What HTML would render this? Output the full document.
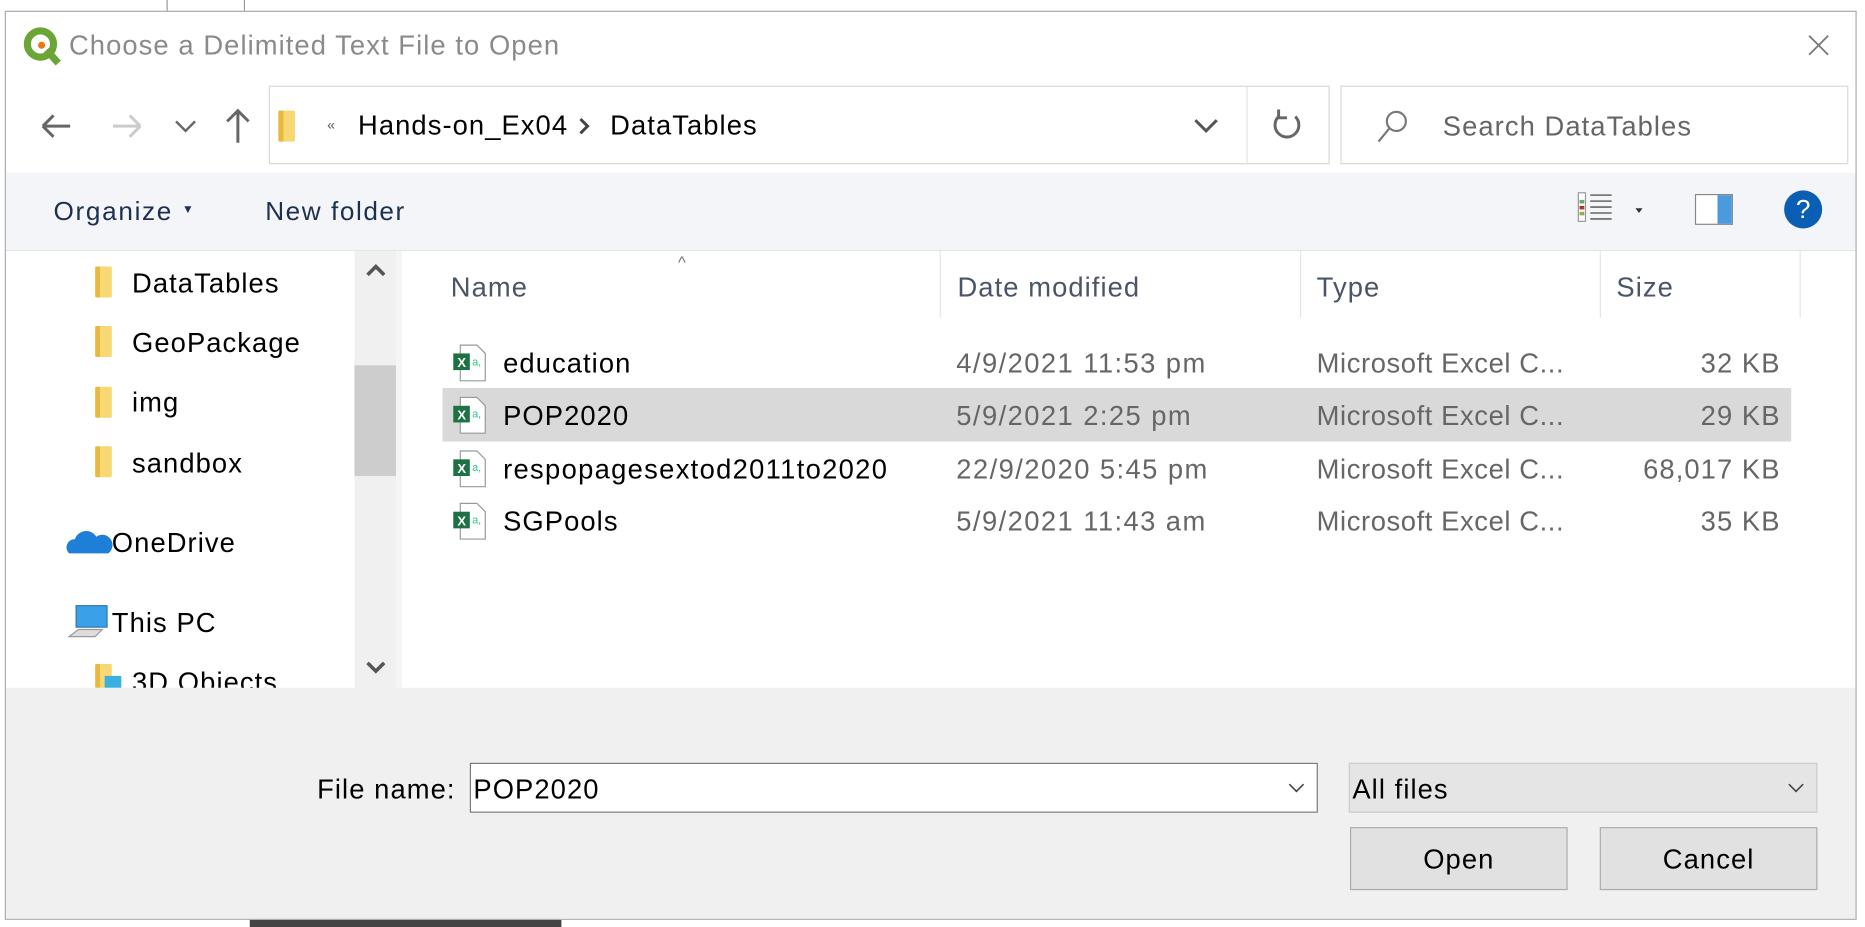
<!DOCTYPE html>
<html><head><meta charset="utf-8"><style>
*{margin:0;padding:0;box-sizing:border-box}
html,body{width:1865px;height:927px;overflow:hidden;background:#fff}
#w{position:absolute;left:0;top:0;width:1568px;height:779px;transform:scale(1.18941,1.19);transform-origin:0 0;font-family:"Liberation Sans",sans-serif;color:#000}
.a{position:absolute}
.t{position:absolute;white-space:nowrap;font-size:22px;line-height:26px;letter-spacing:0.9px}
.f{position:absolute;width:14px;height:26px;background:linear-gradient(90deg,#e8b93c 0 30%,#f8d775 30%);border-radius:1px}
.x{position:absolute;width:28px;height:32px}
</style></head><body><div id="w">
<div class="a" style="left:0;top:0;width:1568px;height:779px;background:#fff"></div>
<div class="a" style="left:140px;top:0;width:1px;height:10px;background:#999"></div>
<div class="a" style="left:205px;top:0;width:1px;height:10px;background:#999"></div>
<div class="a" style="left:210px;top:771px;width:262px;height:8px;background:#444"></div>
<div class="a" style="left:4px;top:9px;width:1557px;height:764px;border:1px solid #aaa;background:#fff"></div>
<svg class="a" style="left:19px;top:22px" width="34" height="34" viewBox="0 0 34 34"><circle cx="15" cy="15" r="11" fill="none" stroke="#6aa535" stroke-width="6"/><path d="M20 20 L30 31" stroke="#6aa535" stroke-width="6"/><circle cx="16" cy="16" r="3" fill="#ee7913"/></svg>
<div class="t" style="left:58px;top:25px;color:#8a8a8a;font-size:23px">Choose a Delimited Text File to Open</div>
<svg class="a" style="left:1518px;top:27px" width="22" height="22"><path d="M3 3L19 19M19 3L3 19" stroke="#777" stroke-width="1.5"/></svg>
<svg class="a" style="left:32px;top:93px" width="30" height="26"><path d="M4 13H27M4 13L13 4M4 13L13 22" stroke="#666" stroke-width="2.5" fill="none"/></svg>
<svg class="a" style="left:92px;top:93px" width="30" height="26"><path d="M26 13H3M26 13L17 4M26 13L17 22" stroke="#ccc" stroke-width="2.5" fill="none"/></svg>
<svg class="a" style="left:145px;top:98px" width="22" height="16"><path d="M3 4L11 12L19 4" stroke="#666" stroke-width="2" fill="none"/></svg>
<svg class="a" style="left:188px;top:90px" width="24" height="32"><path d="M12 30V3M3 12L12 3L21 12" stroke="#666" stroke-width="2.5" fill="none"/></svg>
<div class="a" style="left:226px;top:72px;width:892px;height:66px;border:1px solid #d9d9d9"></div>
<div class="a" style="left:1048px;top:72px;width:1px;height:66px;background:#e5e5e5"></div>
<div class="f" style="left:234px;top:93px"></div>
<div class="t" style="left:275px;top:92px;font-size:12px;color:#555">«</div>
<div class="t" style="left:301px;top:92px;font-size:23px">Hands-on_Ex04</div>
<svg class="a" style="left:484px;top:97px" width="14" height="18"><path d="M4 3L10 9L4 15" stroke="#444" stroke-width="2.5" fill="none"/></svg>
<div class="t" style="left:513px;top:92px;font-size:23px">DataTables</div>
<svg class="a" style="left:1002px;top:98px" width="24" height="16"><path d="M3 3L12 12L21 3" stroke="#555" stroke-width="2.5" fill="none"/></svg>
<svg class="a" style="left:1067px;top:89px" width="30" height="32"><path d="M22 9A10 10 0 1 1 8 9" stroke="#666" stroke-width="2.5" fill="none"/><path d="M8 3V10H15" stroke="#666" stroke-width="2.5" fill="none"/></svg>
<div class="a" style="left:1127px;top:72px;width:427px;height:66px;border:1px solid #d9d9d9"></div>
<svg class="a" style="left:1155px;top:90px" width="34" height="32"><circle cx="19" cy="12" r="8" fill="none" stroke="#777" stroke-width="1.8"/><path d="M13 18L4 29" stroke="#777" stroke-width="1.8"/></svg>
<div class="t" style="left:1213px;top:93px;font-size:23px;color:#666">Search DataTables</div>
<div class="a" style="left:5px;top:145px;width:1555px;height:66px;background:#f3f5f8;border-bottom:1px solid #e5e5e5"></div>
<div class="t" style="left:45px;top:165px;color:#1e3050;letter-spacing:1.4px">Organize</div>
<div class="t" style="left:153px;top:164px;color:#1e3050;font-size:10px">▼</div>
<div class="t" style="left:223px;top:165px;color:#1e3050;letter-spacing:1.3px">New folder</div>
<svg class="a" style="left:1325px;top:160px" width="60" height="30"><g stroke="#666" stroke-width="1.3"><path d="M12 4H30M12 9H30M12 14H30M12 19H30M12 24H30"/></g><rect x="2" y="2" width="6" height="24" fill="#fff" stroke="#999"/><rect x="3" y="8" width="4" height="3" fill="#6a6"/><rect x="3" y="13" width="4" height="3" fill="#a33"/><rect x="3" y="18" width="4" height="3" fill="#9a5"/><path d="M50 15L56 15L53 19Z" fill="#333"/></svg>
<div class="a" style="left:1425px;top:163px;width:32px;height:26px;border:1px solid #888;background:linear-gradient(90deg,#fff 0 60%,#4a9ae0 60%)"></div>
<div class="a" style="left:1500px;top:160px;width:32px;height:32px;border-radius:50%;background:#0a5fb4;color:#fff;font-size:22px;text-align:center;line-height:32px">?</div>
<div class="f" style="left:80px;top:224px"></div><div class="t" style="left:111px;top:225px;font-size:23px">DataTables</div>
<div class="f" style="left:80px;top:274px"></div><div class="t" style="left:111px;top:275px;font-size:23px">GeoPackage</div>
<div class="f" style="left:80px;top:325px"></div><div class="t" style="left:111px;top:325px;font-size:23px">img</div>
<div class="f" style="left:80px;top:375px"></div><div class="t" style="left:111px;top:376px;font-size:23px">sandbox</div>
<svg class="a" style="left:55px;top:443px" width="40" height="24"><path d="M3 22A7 7 0 0 1 8 10A10 10 0 0 1 26 8A8 8 0 0 1 36 22Z" fill="#1e7fd8"/></svg>
<div class="t" style="left:94px;top:443px;font-size:23px">OneDrive</div>
<svg class="a" style="left:56px;top:507px" width="40" height="32"><rect x="8" y="2" width="26" height="18" fill="#3aa0e8" stroke="#3371b0"/><path d="M2 28L10 22H30L24 28Z" fill="#ddd" stroke="#999"/></svg>
<div class="t" style="left:94px;top:510px;font-size:23px">This PC</div>
<div class="f" style="left:80px;top:558px;height:20px"></div><div class="a" style="left:88px;top:568px;width:14px;height:10px;background:#3ab0e0"></div>
<div class="a" style="left:111px;top:560px;width:200px;height:18px;overflow:hidden"><div class="t" style="left:0;top:0;font-size:23px">3D Objects</div></div>
<div class="a" style="left:298px;top:211px;width:35px;height:367px;background:#f0f0f0"></div>
<div class="a" style="left:298px;top:307px;width:35px;height:93px;background:#cdcdcd"></div>
<svg class="a" style="left:306px;top:220px" width="20" height="14"><path d="M3 11L10 4L17 11" stroke="#555" stroke-width="3" fill="none"/></svg>
<svg class="a" style="left:306px;top:554px" width="20" height="14"><path d="M3 3L10 10L17 3" stroke="#555" stroke-width="3" fill="none"/></svg>
<div class="a" style="left:333px;top:211px;width:5px;height:367px;background:#f5f5f5"></div>
<div class="t" style="left:570px;top:207px;font-size:14px;color:#777">^</div>
<div class="t" style="left:379px;top:228px;color:#4a5568;font-size:23px">Name</div>
<div class="t" style="left:805px;top:228px;color:#4a5568;font-size:23px">Date modified</div>
<div class="t" style="left:1107px;top:228px;color:#4a5568;font-size:23px">Type</div>
<div class="t" style="left:1359px;top:228px;color:#4a5568;font-size:23px">Size</div>
<div class="a" style="left:790px;top:211px;width:1px;height:56px;background:#e5e5e5"></div>
<div class="a" style="left:1093px;top:211px;width:1px;height:56px;background:#e5e5e5"></div>
<div class="a" style="left:1345px;top:211px;width:1px;height:56px;background:#e5e5e5"></div>
<div class="a" style="left:1513px;top:211px;width:1px;height:56px;background:#e5e5e5"></div>
<div class="a" style="left:372px;top:326px;width:1134px;height:45px;background:#d9d9d9"></div>
<svg style="display:none"><symbol id="xl" viewBox="0 0 28 32"><path d="M6 1H20L27 8V31H6Z" fill="#fff" stroke="#999"/><rect x="0" y="8" width="14" height="14" fill="#1e7145"/><text x="3.5" y="19.5" font-size="11" font-weight="bold" fill="#fff" font-family="Liberation Sans">X</text><text x="16" y="18" font-size="9" fill="#33c481" font-family="Liberation Sans">a,</text></symbol></svg>
<svg class="x" style="left:381px;top:289px"><use href="#xl"/></svg>
<svg class="x" style="left:381px;top:333px"><use href="#xl"/></svg>
<svg class="x" style="left:381px;top:378px"><use href="#xl"/></svg>
<svg class="x" style="left:381px;top:422px"><use href="#xl"/></svg>
<div class="t" style="left:423px;top:292px;font-size:23px">education</div>
<div class="t" style="left:423px;top:336px;font-size:23px">POP2020</div>
<div class="t" style="left:423px;top:381px;font-size:23px;letter-spacing:1.1px">respopagesextod2011to2020</div>
<div class="t" style="left:423px;top:425px;font-size:23px">SGPools</div>
<div class="t" style="left:804px;top:292px;font-size:23px;color:#666;letter-spacing:1.2px">4/9/2021 11:53 pm</div>
<div class="t" style="left:804px;top:336px;font-size:23px;color:#666;letter-spacing:1.2px">5/9/2021 2:25 pm</div>
<div class="t" style="left:804px;top:381px;font-size:23px;color:#666;letter-spacing:1.2px">22/9/2020 5:45 pm</div>
<div class="t" style="left:804px;top:425px;font-size:23px;color:#666;letter-spacing:1.2px">5/9/2021 11:43 am</div>
<div class="t" style="left:1107px;top:292px;font-size:23px;color:#666;letter-spacing:0.5px">Microsoft Excel C...</div>
<div class="t" style="left:1107px;top:336px;font-size:23px;color:#666;letter-spacing:0.5px">Microsoft Excel C...</div>
<div class="t" style="left:1107px;top:381px;font-size:23px;color:#666;letter-spacing:0.5px">Microsoft Excel C...</div>
<div class="t" style="left:1107px;top:425px;font-size:23px;color:#666;letter-spacing:0.5px">Microsoft Excel C...</div>
<div class="t" style="right:71px;top:292px;font-size:23px;color:#666">32 KB</div>
<div class="t" style="right:71px;top:336px;font-size:23px;color:#666">29 KB</div>
<div class="t" style="right:71px;top:381px;font-size:23px;color:#666">68,017 KB</div>
<div class="t" style="right:71px;top:425px;font-size:23px;color:#666">35 KB</div>
<div class="a" style="left:5px;top:578px;width:1555px;height:194px;background:#f0f0f0"></div>
<div class="t" style="right:1185px;top:650px;font-size:23px">File name:</div>
<div class="a" style="left:395px;top:641px;width:713px;height:42px;background:#fff;border:1px solid #7a7a7a"></div>
<div class="t" style="left:398px;top:650px;font-size:23px">POP2020</div>
<svg class="a" style="left:1082px;top:656px" width="16" height="12"><path d="M2 3L8 9L14 3" stroke="#444" stroke-width="1.3" fill="none"/></svg>
<div class="a" style="left:1134px;top:641px;width:394px;height:42px;background:#e5e5e5;border:1px solid #ccc"></div>
<div class="t" style="left:1137px;top:650px;font-size:23px">All files</div>
<svg class="a" style="left:1502px;top:656px" width="16" height="12"><path d="M2 3L8 9L14 3" stroke="#444" stroke-width="1.3" fill="none"/></svg>
<div class="a" style="left:1135px;top:695px;width:183px;height:53px;background:#e1e1e1;border:1px solid #adadad"></div>
<div class="t" style="left:1135px;top:709px;width:183px;text-align:center;font-size:23px">Open</div>
<div class="a" style="left:1345px;top:695px;width:183px;height:53px;background:#e1e1e1;border:1px solid #adadad"></div>
<div class="t" style="left:1345px;top:709px;width:183px;text-align:center;font-size:23px">Cancel</div>
</div></body></html>
